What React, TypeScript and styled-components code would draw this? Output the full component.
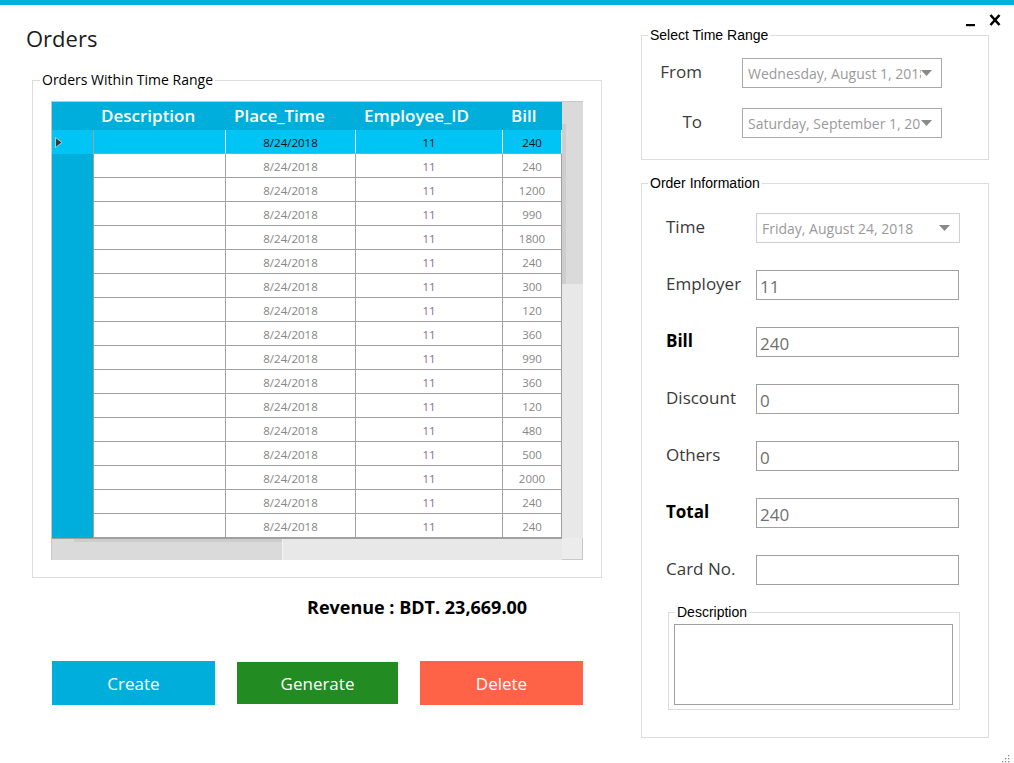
import React from 'react'
import styled, { createGlobalStyle } from 'styled-components'

const GlobalStyle = createGlobalStyle`
  html, body {
    margin: 0;
    padding: 0;
    background: #ffffff;
  }
  * {
    box-sizing: border-box;
  }
`

const UI_FONT = `"Open Sans", "Noto Sans", sans-serif`
const SANS_FONT = `"Liberation Sans", Arial, sans-serif`
const CYAN = '#00aedb'

const Window = styled.div`
  width: 1014px;
  height: 763px;
  background: #fff;
  font-family: ${UI_FONT};
  overflow: hidden;
`

const TopBar = styled.div`
  height: 5px;
  background: ${CYAN};
`

const Body = styled.div`
  display: flex;
`

const LeftColumn = styled.div`
  width: 641px;
  display: flex;
  flex-direction: column;
`

const Title = styled.h1`
  margin: 17px 0 0 26px;
  font-size: 22px;
  line-height: 32px;
  font-weight: 400;
  color: #1c1c1c;
`

const Fieldset = styled.fieldset<{ $width: number }>`
  margin: 0;
  padding: 0;
  min-inline-size: auto;
  width: ${p => p.$width}px;
  border: 1px solid #dcdcdc;
`

const Legend = styled.legend<{ $ui?: boolean }>`
  margin-left: ${p => (p.$ui ? 7 : 6)}px;
  padding: 0 2px;
  font-family: ${p => (p.$ui ? UI_FONT : SANS_FONT)};
  font-size: ${p => (p.$ui ? 14 : 14)}px;
  line-height: 16px;
  color: #000;
`

const OrdersGroup = styled(Fieldset)`
  margin: 18px 0 0 32px;
`

const OrdersInner = styled.div`
  padding: 13px 0 17px 18px;
`

const GridFrame = styled.div`
  display: grid;
  grid-template-columns: 510px 21px;
  grid-template-rows: 436px 22px;
  width: 532px;
  border-top: 1px solid #c8c8c8;
  border-left: 1px solid #c8c8c8;
`

const DataTable = styled.div`
  display: grid;
  grid-template-columns: 41px 133px 130px 147px 59px;
  grid-template-rows: 28px;
  grid-auto-rows: 24px;
  overflow: hidden;
`

const HeaderCell = styled.div`
  background: ${CYAN};
  color: #fff;
  font-size: 17px;
  font-weight: 600;
  line-height: 28px;
  padding-left: 8px;
  white-space: nowrap;
`

const RowHeader = styled.div<{ $selected?: boolean }>`
  background: ${p => (p.$selected ? '#00c4f4' : CYAN)};
  display: flex;
  align-items: center;
  padding-left: 3px;
`

const Cell = styled.div<{ $selected?: boolean; $first?: boolean; $tone?: string }>`
  background: ${p => (p.$selected ? '#00c4f4' : '#fff')};
  border-bottom: 1px solid #a0a0a0;
  border-right: 1px solid ${p => (p.$selected ? '#e6f8fd' : '#a0a0a0')};
  border-left: ${p => (p.$first ? '1px solid #a0a0a0' : '0')};
  color: ${p => (p.$selected ? '#111' : p.$tone || '#8a8a8a')};
  font-size: 11.5px;
  display: flex;
  align-items: center;
  justify-content: center;
  padding-top: 1px;
`

const VScroll = styled.div`
  background: #e8e8e8;
`

const VThumb = styled.div`
  height: 182px;
  background: #dadada;
  padding-top: 22px;
`

const VThumbEdge = styled.div`
  width: 4px;
  height: 160px;
  background: #cdcdcd;
`

const HScroll = styled.div`
  background: #e8e8e8;
  border-top: 1px solid #a0a0a0;
`

const HThumb = styled.div`
  width: 231px;
  height: 100%;
  background: #dadada;
  border-right: 1px solid #f4f4f4;
  padding-left: 22px;
`

const HThumbEdge = styled.div`
  height: 3px;
  background: #cdcdcd;
`

const Corner = styled.div`
  background: #ececec;
  border-right: 1px solid #c8c8c8;
  border-bottom: 1px solid #c8c8c8;
`

const Revenue = styled.div`
  margin: 17px 0 0 307px;
  font-size: 18px;
  line-height: 24px;
  font-weight: 700;
  color: #000;
`

const ButtonRow = styled.div`
  display: flex;
  align-items: center;
  margin: 42px 0 0 52px;
  gap: 22px;
`

const ActionButton = styled.button<{ $bg: string; $w: number; $h: number }>`
  width: ${p => p.$w}px;
  height: ${p => p.$h}px;
  background: ${p => p.$bg};
  border: 0;
  color: #fff;
  font-family: ${UI_FONT};
  font-size: 17px;
  font-weight: 400;
  padding: 0;
`

const RightColumn = styled.div`
  width: 373px;
  display: flex;
  flex-direction: column;
`

const WindowControls = styled.div`
  height: 22px;
  display: flex;
  justify-content: flex-end;
  align-items: flex-start;
  gap: 14px;
  padding: 5px 13px 0 0;
`

const TimeGroupInner = styled.div`
  display: grid;
  grid-template-columns: 42px 200px;
  column-gap: 40px;
  row-gap: 20px;
  padding: 15px 0 21px 18px;
  align-items: center;
`

const RangeLabel = styled.div`
  text-align: right;
  font-size: 17px;
  color: #3c3c3c;
  line-height: 24px;
  margin-top: -3px;
  white-space: nowrap;
`

const Picker = styled.div<{ $w: number; $muted?: boolean }>`
  width: ${p => p.$w}px;
  height: 30px;
  border: 1px solid ${p => (p.$muted ? '#cfcfcf' : '#a9a9a9')};
  background: #fff;
  display: flex;
  align-items: center;
  padding-left: 5px;
`

const PickerText = styled.span`
  flex: 1;
  overflow: hidden;
  white-space: nowrap;
  font-size: 14px;
  color: #9a9a9a;
`

const InfoGroup = styled(Fieldset)`
  margin-top: 15px;
`

const InfoInner = styled.div`
  padding: 22px 0 27px 0;
`

const FormGrid = styled.div`
  display: grid;
  grid-template-columns: 90px 204px;
  row-gap: 27px;
  padding-left: 24px;
  align-items: center;
`

const FieldLabel = styled.div<{ $bold?: boolean }>`
  font-size: 17px;
  line-height: 24px;
  margin-top: -2px;
  font-weight: ${p => (p.$bold ? 700 : 400)};
  color: ${p => (p.$bold ? '#000' : '#3a3a3a')};
`

const TextBox = styled.div`
  width: 203px;
  height: 30px;
  border: 1px solid #a0a0a0;
  font-size: 17px;
  color: #707070;
  padding: 4px 0 0 3px;
  line-height: 24px;
`

const DescGroup = styled(Fieldset)`
  margin: 19px 0 0 26px;
`

const DescInner = styled.div`
  padding: 4px 5px 4px 5px;
`

const DescBox = styled.div`
  width: 279px;
  height: 81px;
  border: 1px solid #a0a0a0;
`

const Grip = styled.div`
  align-self: flex-end;
  margin: 8px 4px 0 0;
`

const bills = [240, 240, 1200, 990, 1800, 240, 300, 120, 360, 990, 360, 120, 480, 500, 2000, 240, 240]

const DownArrow = () => (
  <svg width="11" height="6" viewBox="0 0 11 6" style={{ marginRight: 9, flexShrink: 0 }}>
    <path d="M0 0 L11 0 L5.5 6 Z" fill="#8a8a8a" />
  </svg>
)

const RowArrow = () => (
  <svg width="8" height="11" viewBox="0 0 8 11">
    <path d="M0.5 0.5 L7 5.5 L0.5 10.5 Z" fill="#3a3a3a" stroke="#ffffff" strokeWidth="0.6" />
  </svg>
)

function OrdersGrid() {
  return (
    <GridFrame>
      <DataTable>
        <HeaderCell />
        <HeaderCell>Description</HeaderCell>
        <HeaderCell>Place_Time</HeaderCell>
        <HeaderCell>Employee_ID</HeaderCell>
        <HeaderCell>Bill</HeaderCell>
        {bills.map((bill, i) => {
          const sel = i === 0
          return (
            <React.Fragment key={i}>
              <RowHeader $selected={sel}>{sel && <RowArrow />}</RowHeader>
              <Cell $selected={sel} $first />
              <Cell $selected={sel} $tone="#858585">8/24/2018</Cell>
              <Cell $selected={sel} $tone="#8b6f8d">11</Cell>
              <Cell $selected={sel} $tone="#878787">{bill}</Cell>
            </React.Fragment>
          )
        })}
      </DataTable>
      <VScroll>
        <VThumb>
          <VThumbEdge />
        </VThumb>
      </VScroll>
      <HScroll>
        <HThumb>
          <HThumbEdge />
        </HThumb>
      </HScroll>
      <Corner />
    </GridFrame>
  )
}

export default function App() {
  return (
    <Window>
      <GlobalStyle />
      <TopBar />
      <Body>
        <LeftColumn>
          <Title>Orders</Title>
          <OrdersGroup $width={570}>
            <Legend $ui>Orders Within Time Range</Legend>
            <OrdersInner>
              <OrdersGrid />
            </OrdersInner>
          </OrdersGroup>
          <Revenue>Revenue : BDT. 23,669.00</Revenue>
          <ButtonRow>
            <ActionButton $bg="#00aedb" $w={163} $h={44}>Create</ActionButton>
            <ActionButton $bg="#228b22" $w={161} $h={42}>Generate</ActionButton>
            <ActionButton $bg="#ff6347" $w={163} $h={44}>Delete</ActionButton>
          </ButtonRow>
        </LeftColumn>

        <RightColumn>
          <WindowControls>
            <svg width="9" height="17" viewBox="0 0 9 17">
              <rect x="0" y="14" width="9" height="2.2" fill="#000" />
            </svg>
            <svg width="12" height="17" viewBox="0 0 12 17">
              <path d="M1.5 5 L10.5 15 M10.5 5 L1.5 15" stroke="#000" strokeWidth="2.6" />
            </svg>
          </WindowControls>

          <Fieldset $width={348}>
            <Legend>Select Time Range</Legend>
            <TimeGroupInner>
              <RangeLabel>From</RangeLabel>
              <Picker $w={200}>
                <PickerText>Wednesday, August 1, 2018</PickerText>
                <DownArrow />
              </Picker>
              <RangeLabel>To</RangeLabel>
              <Picker $w={200}>
                <PickerText>Saturday, September 1, 2018</PickerText>
                <DownArrow />
              </Picker>
            </TimeGroupInner>
          </Fieldset>

          <InfoGroup $width={348}>
            <Legend>Order Information</Legend>
            <InfoInner>
              <FormGrid>
                <FieldLabel>Time</FieldLabel>
                <Picker $w={204} $muted>
                  <PickerText>Friday, August 24, 2018</PickerText>
                  <DownArrow />
                </Picker>
                <FieldLabel>Employer</FieldLabel>
                <TextBox>11</TextBox>
                <FieldLabel $bold>Bill</FieldLabel>
                <TextBox>240</TextBox>
                <FieldLabel>Discount</FieldLabel>
                <TextBox>0</TextBox>
                <FieldLabel>Others</FieldLabel>
                <TextBox>0</TextBox>
                <FieldLabel $bold>Total</FieldLabel>
                <TextBox>240</TextBox>
                <FieldLabel>Card No.</FieldLabel>
                <TextBox />
              </FormGrid>
              <DescGroup $width={292}>
                <Legend>Description</Legend>
                <DescInner>
                  <DescBox />
                </DescInner>
              </DescGroup>
            </InfoInner>
          </InfoGroup>

          <Grip>
            <svg width="10" height="10" viewBox="0 0 10 10">
              <rect x="8" y="2" width="1.3" height="1.3" fill="#888" />
              <rect x="5" y="5" width="1.3" height="1.3" fill="#888" />
              <rect x="8" y="5" width="1.3" height="1.3" fill="#888" />
              <rect x="2" y="8" width="1.3" height="1.3" fill="#888" />
              <rect x="5" y="8" width="1.3" height="1.3" fill="#888" />
              <rect x="8" y="8" width="1.3" height="1.3" fill="#888" />
            </svg>
          </Grip>
        </RightColumn>
      </Body>
    </Window>
  )
}
